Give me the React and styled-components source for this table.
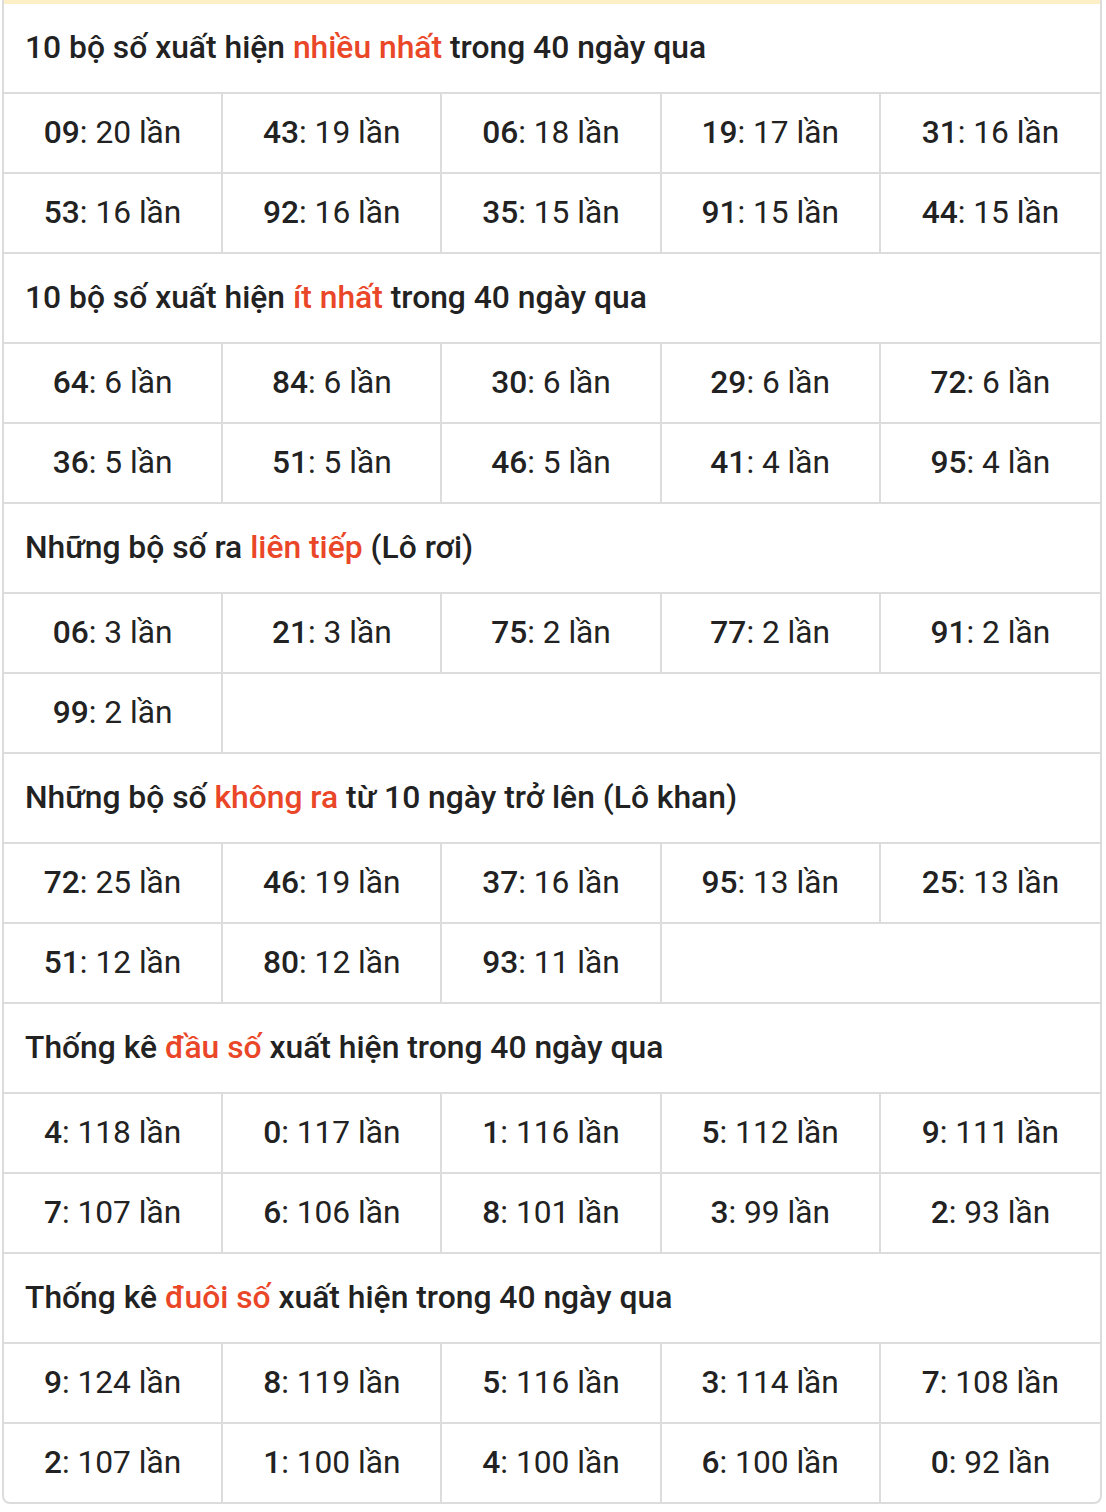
import React from "react";
import styled, { createGlobalStyle } from "styled-components";

const GlobalStyle = createGlobalStyle`
  html, body { margin: 0; padding: 0; background: #fff; }
  body { font-family: Roboto, "Noto Sans", "Liberation Sans", sans-serif; color: #222; }
`;

const Card = styled.div`
  margin: 0 4px 8px 2px;
  border: 2px solid #dcdcdc;
  border-top: none;
  border-radius: 0 0 8px 8px;
  overflow: hidden;
  background: #fff;
`;

const TopStrip = styled.div`
  height: 4px;
  background: #fdf0c6;
`;

const Section = styled.section``;

const Title = styled.h2`
  margin: 0;
  box-sizing: border-box;
  height: 90px;
  padding: 0 0 2px 21px;
  display: flex;
  align-items: center;
  font-size: 31.8px;
  font-weight: 500;
  color: #222;
  border-bottom: 2px solid #dcdcdc;
`;

const Hl = styled.span`
  color: #ea4628;
`;

const Row = styled.div`
  display: grid;
  grid-template-columns: repeat(5, 1fr);
  height: 78px;
  border-bottom: 2px solid #dcdcdc;
  ${Section}:last-child &:last-child { border-bottom: none; }
`;

const Cell = styled.div`
  display: flex;
  align-items: center;
  justify-content: center;
  padding-bottom: 2px;
  font-size: 31.7px;
  color: #222;
  border-right: ${(p) => (p.$empty || p.$last ? "none" : "2px solid #dcdcdc")};
`;

const Num = styled.b`
  font-weight: 500;
`;

const sections = [
  {
    title: ["10 bộ số xuất hiện ", "nhiều nhất", " trong 40 ngày qua"],
    items: [["09", 20], ["43", 19], ["06", 18], ["19", 17], ["31", 16], ["53", 16], ["92", 16], ["35", 15], ["91", 15], ["44", 15]],
  },
  {
    title: ["10 bộ số xuất hiện ", "ít nhất", " trong 40 ngày qua"],
    items: [["64", 6], ["84", 6], ["30", 6], ["29", 6], ["72", 6], ["36", 5], ["51", 5], ["46", 5], ["41", 4], ["95", 4]],
  },
  {
    title: ["Những bộ số ra ", "liên tiếp", " (Lô rơi)"],
    items: [["06", 3], ["21", 3], ["75", 2], ["77", 2], ["91", 2], ["99", 2]],
  },
  {
    title: ["Những bộ số ", "không ra", " từ 10 ngày trở lên (Lô khan)"],
    items: [["72", 25], ["46", 19], ["37", 16], ["95", 13], ["25", 13], ["51", 12], ["80", 12], ["93", 11]],
  },
  {
    title: ["Thống kê ", "đầu số", " xuất hiện trong 40 ngày qua"],
    items: [["4", 118], ["0", 117], ["1", 116], ["5", 112], ["9", 111], ["7", 107], ["6", 106], ["8", 101], ["3", 99], ["2", 93]],
  },
  {
    title: ["Thống kê ", "đuôi số", " xuất hiện trong 40 ngày qua"],
    items: [["9", 124], ["8", 119], ["5", 116], ["3", 114], ["7", 108], ["2", 107], ["1", 100], ["4", 100], ["6", 100], ["0", 92]],
  },
];

function chunk(arr, n) {
  const out = [];
  for (let i = 0; i < arr.length; i += n) out.push(arr.slice(i, i + n));
  return out;
}

export default function App() {
  return (
    <>
      <GlobalStyle />
      <Card>
        <TopStrip />
        {sections.map((s, si) => (
          <Section key={si}>
            <Title>
              <span>
                {s.title[0]}
                <Hl>{s.title[1]}</Hl>
                {s.title[2]}
              </span>
            </Title>
            {chunk(s.items, 5).map((row, ri) => (
              <Row key={ri}>
                {[0, 1, 2, 3, 4].map((ci) => {
                  const it = row[ci];
                  if (!it) return <Cell key={ci} $empty />;
                  return (
                    <Cell key={ci} $last={ci === 4}>
                      <span>
                        <Num>{it[0]}</Num>: {it[1]} lần
                      </span>
                    </Cell>
                  );
                })}
              </Row>
            ))}
          </Section>
        ))}
      </Card>
    </>
  );
}
